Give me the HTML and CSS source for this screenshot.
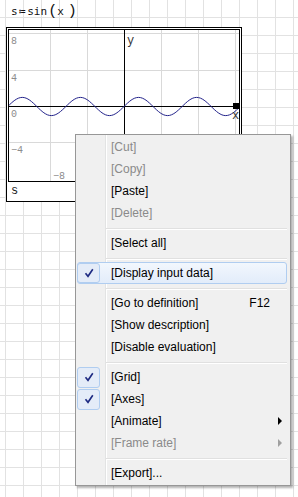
FILE: index.html
```html
<!DOCTYPE html>
<html lang="en">
<head>
  <meta charset="UTF-8" />
  <title>Plot context menu</title>
  <link rel="stylesheet" href="styles.css">
</head>
<body>
  <div class="sheet">
    <div class="formula">
      <span>s</span><span class="def">≔</span><span>sin</span><span class="paren open">(</span><span class="arg">x</span><span class="paren">)</span>
    </div>

    <div class="plot-frame">
      <div class="plot">
        <svg class="plot-area" width="230" height="151" viewBox="0 0 230 151">
          <g stroke="#d9d9d9" stroke-width="1">
            <line x1="41.5" y1="0" x2="41.5" y2="151"/>
            <line x1="78.5" y1="0" x2="78.5" y2="151"/>
            <line x1="152.5" y1="0" x2="152.5" y2="151"/>
            <line x1="189.5" y1="0" x2="189.5" y2="151"/>
            <line x1="226.5" y1="0" x2="226.5" y2="151"/>
            <line x1="0" y1="3.5" x2="230" y2="3.5"/>
            <line x1="0" y1="40.5" x2="230" y2="40.5"/>
            <line x1="0" y1="112.5" x2="230" y2="112.5"/>
          </g>
          <g class="tick-labels" fill="#8c8c8c">
            <text x="2" y="14">8</text>
            <text x="2" y="51">4</text>
            <text x="2" y="87">0</text>
            <text x="2" y="123">−4</text>
            <text x="44" y="149">−8</text>
          </g>
          <g stroke="#000" stroke-width="1">
            <line x1="115.5" y1="0" x2="115.5" y2="151"/>
            <line x1="0" y1="76.5" x2="230" y2="76.5"/>
          </g>
          <path fill="none" stroke="#22228a" stroke-width="1"
            d="M-1.24 76.5
               c4.74 -4.66 9.27 -9.1 14.53 -9.1 c5.26 0 9.79 4.44 14.53 9.1
               c4.74 4.66 9.27 9.1 14.53 9.1 c5.26 0 9.79 -4.44 14.53 -9.1
               c4.74 -4.66 9.27 -9.1 14.53 -9.1 c5.26 0 9.79 4.44 14.53 9.1
               c4.74 4.66 9.27 9.1 14.53 9.1 c5.26 0 9.79 -4.44 14.53 -9.1
               c4.74 -4.66 9.27 -9.1 14.53 -9.1 c5.26 0 9.79 4.44 14.53 9.1
               c4.74 4.66 9.27 9.1 14.53 9.1 c5.26 0 9.79 -4.44 14.53 -9.1
               c4.74 -4.66 9.27 -9.1 14.53 -9.1 c5.26 0 9.79 4.44 14.53 9.1
               c4.74 4.66 9.27 9.1 14.53 9.1 c5.26 0 9.79 -4.44 14.53 -9.1"/>
          <rect x="224" y="73" width="6" height="6" fill="#000"/>
          <g class="axis-labels" fill="#333">
            <text x="118" y="14">y</text>
            <text x="223" y="89">x</text>
          </g>
        </svg>
      </div>
      <div class="plot-name">s</div>
    </div>
  </div>

  <!-- context menu over the plot -->
  <div class="menu">
    <div class="item disabled"><span class="gutter"></span>[Cut]</div>
    <div class="item disabled"><span class="gutter"></span>[Copy]</div>
    <div class="item"><span class="gutter"></span>[Paste]</div>
    <div class="item disabled"><span class="gutter"></span>[Delete]</div>
    <div class="sep"></div>
    <div class="item"><span class="gutter"></span>[Select all]</div>
    <div class="sep"></div>
    <div class="item checked hover">
      <span class="gutter"><svg width="10" height="10" viewBox="0 0 10 10"><path d="M1.5 5.2 L4 8.3 L8.8 1.2" fill="none" stroke="#1d2a82" stroke-width="1.6"/></svg></span>[Display input data]
    </div>
    <div class="sep"></div>
    <div class="item"><span class="gutter"></span>[Go to definition]<span class="shortcut">F12</span></div>
    <div class="item"><span class="gutter"></span>[Show description]</div>
    <div class="item"><span class="gutter"></span>[Disable evaluation]</div>
    <div class="sep"></div>
    <div class="item checked">
      <span class="gutter"><svg width="10" height="10" viewBox="0 0 10 10"><path d="M1.5 5.2 L4 8.3 L8.8 1.2" fill="none" stroke="#1d2a82" stroke-width="1.6"/></svg></span>[Grid]
    </div>
    <div class="item checked">
      <span class="gutter"><svg width="10" height="10" viewBox="0 0 10 10"><path d="M1.5 5.2 L4 8.3 L8.8 1.2" fill="none" stroke="#1d2a82" stroke-width="1.6"/></svg></span>[Axes]
    </div>
    <div class="item"><span class="gutter"></span>[Animate]<span class="arrow"></span></div>
    <div class="item disabled"><span class="gutter"></span>[Frame rate]<span class="arrow"></span></div>
    <div class="sep"></div>
    <div class="item"><span class="gutter"></span>[Export]...</div>
  </div>
</body>
</html>
```

FILE: styles.css
```css
html, body {
  margin: 0;
  height: 100%;
}

body {
  min-height: 497px;
  background-color: #fff;
  background-image:
    linear-gradient(to right, #e2e2e2 1px, transparent 1px),
    linear-gradient(to bottom, #e2e2e2 1px, transparent 1px);
  background-size: 18px 18px;
  background-position: 5px 17px;
  font-family: "Liberation Sans", Arial, sans-serif;
}

.sheet {
  padding-top: 1px;
}

/* formula line: s := sin(x) */
.formula {
  height: 26px;
  padding-left: 11px;
  font-family: "DejaVu Sans Mono", "Liberation Mono", monospace;
  font-size: 11px;
  line-height: 22px;
  color: #111;
}

.formula .def {
  margin: 0 2px 0 1px;
}

.formula .paren {
  font-family: "Liberation Mono", monospace;
  font-size: 15px;
  font-weight: lighter;
  margin: 0 1px;
}

.formula .paren.open {
  margin-right: 0;
}

.formula .arg {
  margin-right: 3px;
}

/* plot region */
.plot-frame {
  width: 236px;
  box-sizing: border-box;
  margin-left: 6px;
  border: 1px solid #000;
  padding: 1px 1px 0;
  background: #fff;
}

.plot {
  height: 153px;
  box-sizing: border-box;
  border: 1px solid #000;
}

.plot-area {
  display: block;
}

.tick-labels {
  font-family: "Liberation Mono", monospace;
  font-size: 10px;
}

.axis-labels {
  font-family: "Liberation Mono", monospace;
  font-size: 12px;
}

.plot-name {
  height: 19px;
  padding-left: 3px;
  font-family: "Liberation Mono", monospace;
  font-size: 12px;
  line-height: 19px;
  color: #222;
}

/* context menu */
.menu {
  position: absolute;
  left: 75px;
  top: 134px;
  width: 216px;
  box-sizing: border-box;
  padding: 1px 3px 1px 1px;
  border: 1px solid #979797;
  background-color: #f0f0f0;
  background-image: linear-gradient(to right, transparent 29px, #e2e3e3 29px, #e2e3e3 30px, #fff 30px, #fff 31px, transparent 31px);
  box-shadow: 2px 2px 2px rgba(0, 0, 0, 0.3);
  font-size: 12px;
  color: #000;
}

.item {
  display: flex;
  align-items: center;
  height: 22px;
  box-sizing: border-box;
  white-space: nowrap;
}

.item.disabled {
  color: #8a8a8a;
}

.item.hover {
  border: 1px solid #b0cdf0;
  border-radius: 3px;
  background: linear-gradient(#f2f7fd, #e2ecfa);
}

.gutter {
  flex: none;
  width: 23px;
  height: 21px;
  margin-right: 11px;
  box-sizing: border-box;
  display: flex;
  align-items: center;
  justify-content: center;
}

.item.hover .gutter {
  height: 20px;
  margin-left: -1px;
}

.item.checked .gutter {
  border: 1px solid #b0cdf0;
  border-radius: 3px;
  background: #e4ecf8;
}

.shortcut {
  margin-left: auto;
  margin-right: 17px;
}

.arrow {
  margin-left: auto;
  margin-right: 5px;
  width: 0;
  height: 0;
  border-left: 4px solid #000;
  border-top: 4px solid transparent;
  border-bottom: 4px solid transparent;
}

.item.disabled .arrow {
  border-left-color: #a0a0a0;
}

.sep {
  height: 8px;
  margin-left: 29px;
  box-sizing: border-box;
  padding-top: 4px;
}

.sep::before {
  content: "";
  display: block;
  height: 1px;
  background: #e0e0e0;
  border-bottom: 1px solid #fff;
}
```
